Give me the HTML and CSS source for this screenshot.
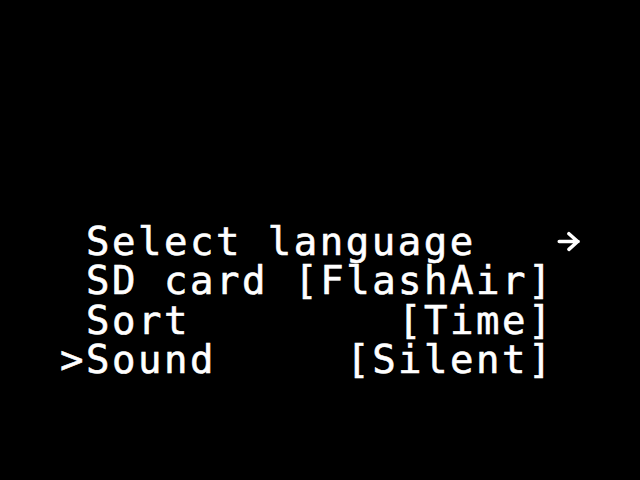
FILE: index.html
```html
<!DOCTYPE html>
<html lang="en">
<head>
<meta charset="utf-8">
<title>Menu</title>
<link rel="stylesheet" href="styles.css">
</head>
<body>
<main class="screen">
  <ul class="menu">
    <li class="item"><span class="cursor"> </span><span class="label">Select language</span><span class="value value-arrow"><svg class="arrow" viewBox="0 0 26 26" width="26" height="26" aria-label="→"><path d="M3.5 12.5H24M14 4L23.5 12.5L14 21" stroke="#fff" stroke-width="3.8" fill="none" stroke-linecap="round" stroke-linejoin="round"/></svg></span></li>
    <li class="item"><span class="cursor"> </span><span class="label">SD card</span><span class="value">[FlashAir]</span></li>
    <li class="item"><span class="cursor"> </span><span class="label">Sort</span><span class="value">[Time]</span></li>
    <li class="item item-selected"><span class="cursor">&gt;</span><span class="label">Sound</span><span class="value">[Silent]</span></li>
  </ul>
</main>
</body>
</html>
```
FILE: styles.css
```css
html, body {
  margin: 0;
  padding: 0;
  background: #000;
}

.screen {
  width: 640px;
  height: 480px;
  box-sizing: border-box;
  padding: 222px 0 0 60px;
  background: #000;
  color: #fff;
  font-family: "DejaVu Sans Mono", "Liberation Mono", monospace;
  font-size: 39px;
  line-height: 39.3px;
  letter-spacing: 2.5px;
  -webkit-text-stroke: 0.6px #fff;
}

.menu {
  list-style: none;
  margin: 0;
  padding: 0;
  width: 520px;
}

.item {
  display: flex;
  white-space: pre;
}

.cursor {
  width: 26px;
  flex: none;
}

.label {
  flex: 1;
}

.value {
  margin-right: 26px;
}

.value-arrow {
  margin-right: 0;
  width: 26px;
  display: flex;
  align-items: center;
  justify-content: center;
}

.arrow {
  display: block;
  margin-left: 2px;
}
```
